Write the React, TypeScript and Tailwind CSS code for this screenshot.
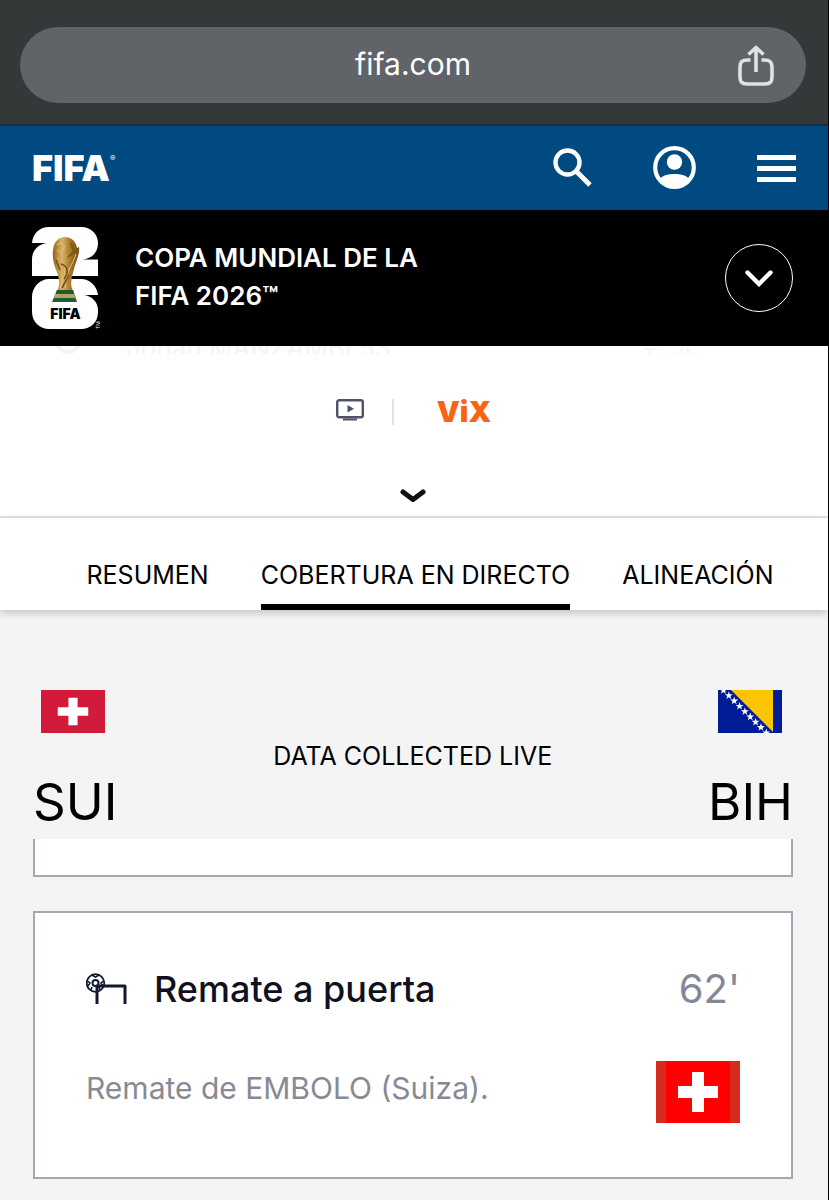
import React from "react";

const team = "flex flex-col";

function SwissFlag({ className, bg, side }: { className: string; bg: string; side: string }) {
  return (
    <svg viewBox="0 0 84 62" preserveAspectRatio="none" className={className} role="img" aria-label="Suiza">
      <rect width="84" height="62" fill={side} />
      <rect x="10" width="64" height="62" fill={bg} />
      <path d="M36 11h12v14h14v12H48v14H36V37H22V25h14z" fill="#fff" />
    </svg>
  );
}

function BosniaFlag() {
  const star = "M0-4.2 1-1.3 4-1.3 1.6.5 2.5 3.4 0 1.6-2.5 3.4-1.6.5-4-1.3-1-1.3z";
  return (
    <svg viewBox="0 0 64 43" className="h-[43px] w-16" role="img" aria-label="Bosnia y Herzegovina">
      <rect width="64" height="43" fill="#001c96" />
      <path d="M13 0h42v42z" fill="#fdc500" />
      <g fill="#fff">
        {[0, 1, 2, 3, 4, 5, 6, 7, 8].map((i) => (
          <path key={i} d={star} transform={`translate(${5.5 + i * 5.35} ${0.3 + i * 5.3})`} />
        ))}
      </g>
    </svg>
  );
}

function Emblem() {
  return (
    <svg viewBox="0 0 68 104" className="h-[104px] w-[68px] shrink-0" role="img" aria-label="FIFA 26">
      <defs>
        <linearGradient id="gold" x1="0" x2="1">
          <stop offset="0" stopColor="#8f6420" />
          <stop offset=".35" stopColor="#dcb364" />
          <stop offset=".65" stopColor="#a87a2c" />
          <stop offset="1" stopColor="#70480f" />
        </linearGradient>
      </defs>
      <path d="M0 17C1 7 8 1 17 1H49C59 1 66 8 66 17C66 26 61 32 51 33.500H66V50H0V33C0 25 6 18 15 17z" fill="#fff" />
      <path d="M0 71C0 61 8 53 17 53H49C58 53 65 60 66 69H52C60 70 66 76 66 84V86C66 96 59 103 49 103H17C8 103 0 96 0 86z" fill="#fff" />
      <path d="M26 63C28 57 27 51 25 46C22 39 20 32 21 24C22 15 27 11 33 11C40 11 44 16 45 22L47 21C48 28 44 35 42 43C40 50 38 56 40 63L42 66H24z" fill="url(#gold)" />
      <path d="M25 32C31 36 35 42 32 50L28 62M44 28C41 39 34 43 33 62M25 19C29 15 33 17 32 22S28 27 25 24" fill="none" stroke="#e6c37a" strokeWidth="1" />
      <path d="M29 38C36 40 37 47 32 53M39 17L42 26 36 31M30 62L37 49M24 34L28 44" fill="none" stroke="#7a5014" strokeWidth="1.600" />
      <path d="M25 64H41L45 76H20z" fill="#205c30" />
      <path d="M23 68H43L44 72H22z" fill="#b0a468" />
      <text x="33.500" y="93" textAnchor="middle" fontFamily="Inter, sans-serif" fontWeight="900" fontSize="14" fill="#000">FIFA</text>
      <text transform="translate(68 103) rotate(-90)" fontFamily="Inter, sans-serif" fontSize="5" fill="#fff">TM</text>
    </svg>
  );
}

export default function App() {
  return (
    <div className="min-h-screen border-r border-black bg-[#f4f4f4] font-['Inter','Liberation_Sans',sans-serif] text-black">
      <div className="border-b-2 border-[#1d2c42] bg-[#343838] pt-[27px] pr-[22px] pb-[21px] pl-5">
        <div className="relative flex h-[76px] items-center justify-center rounded-full bg-[#606367] text-white">
          <span className="pb-[2px] text-[30px]">fifa.com</span>
          <button aria-label="Compartir" className="absolute top-[18px] right-8">
            <svg viewBox="0 0 36 42" className="h-[42px] w-9" fill="none" stroke="#dfe1e3" strokeWidth="3.6">
              <path d="M12.500 15H9.500C4 15 2 17 2 22V32C2 37 4 39 9 39H27C32 39 34 37 34 32V22C34 17 32 15 26.500 15H23.500M18 27V3M10.500 9.500L18 2.500L25.500 9.500" strokeLinejoin="round" />
            </svg>
          </button>
        </div>
      </div>

      <header>
        <nav className="flex h-21 items-center justify-between bg-[#004a82] px-8 text-white">
          <a href="#" className="flex items-start text-[36px] leading-9 font-black">
            FIFA<span className="text-[8px] leading-4 font-normal">®</span>
          </a>
          <div className="flex items-center gap-15">
            <button aria-label="Buscar">
              <svg viewBox="0 0 40 40" className="size-10" fill="none" stroke="#fff">
                <circle cx="14.500" cy="14.500" r="12" strokeWidth="4.400" />
                <path d="M23 23L37 37" strokeWidth="4.800" />
              </svg>
            </button>
            <button aria-label="Cuenta">
              <svg viewBox="0 0 44 44" className="size-11">
                <circle cx="21.500" cy="21.500" r="19.300" fill="none" stroke="#fff" strokeWidth="4.200" />
                <circle cx="21.500" cy="16" r="7.700" fill="#fff" />
                <path d="M7.500 32C13 26.500 30 26.500 35.500 32C29 43 14 43 7.500 32z" fill="#fff" />
              </svg>
            </button>
            <button aria-label="Menú" className="flex w-[39px] flex-col gap-[6px]">
              <span className="h-[5px] bg-white" />
              <span className="h-[5px] bg-white" />
              <span className="h-[5px] bg-white" />
            </button>
          </div>
        </nav>

        <div className="flex h-34 items-center bg-black pr-[35px] pl-8 text-white">
          <Emblem />
          <h1 className="ml-[35px] w-[300px] pb-[2px] text-[26px] leading-[38px] font-semibold">
            COPA MUNDIAL DE LA FIFA 2026™
          </h1>
          <button aria-label="Desplegar" className="ml-auto flex size-17 items-center justify-center rounded-full border border-white">
            <svg viewBox="0 0 28 18" className="h-[18px] w-7" fill="none" stroke="#fff" strokeWidth="4.400" strokeLinecap="round">
              <path d="M2.500 3.500L14 15L25.500 3.500" />
            </svg>
          </button>
        </div>
      </header>

      <section className="flex h-[172px] flex-col items-center border-b-2 border-[#e3e3e3] bg-white">
        <div aria-hidden="true" className="flex h-2 w-full items-end overflow-hidden pr-[130px] pl-[54px] text-[26px] leading-[12px] text-[#f4f4f4]">
          <span className="size-7 rounded-full border-4 border-current" />
          <span className="ml-11">Johan MANZAMBI 53'</span>
          <span className="ml-auto self-start text-[24px] leading-6">Tarik</span>
        </div>
        <div className="mt-10 flex h-9 items-center pr-px">
          <svg viewBox="0 0 28 26" className="h-[26px] w-7" fill="none" stroke="#4f5367" strokeWidth="2.400">
            <rect x="1.200" y="1.200" width="25.600" height="17" rx="2" />
            <path d="M7 20.500H21" strokeWidth="2" />
            <path d="M11.500 6L18 9.700L11.500 13.400z" fill="#4f5367" stroke="none" />
          </svg>
          <span className="ml-7 h-[26px] w-[2px] bg-[#e0e3eb]" />
          <a href="#" className="ml-[43px] text-[29px] leading-8 font-black text-[#fb6212]">ViX</a>
        </div>
        <button aria-label="Mostrar más" className="mt-[58px] pr-[2px]">
          <svg viewBox="0 0 28 16" className="h-4 w-7" fill="none" stroke="#111" strokeWidth="5" strokeLinecap="round" strokeLinejoin="round">
            <path d="M4 4L14 11.500L24 4" />
          </svg>
        </button>
      </section>

      <nav className="flex h-[92px] items-end justify-center gap-[52px] bg-white pl-8 text-[25px] shadow-[0_3px_8px_rgba(0,0,0,0.2)]">
        <a href="#" className="border-b-[6px] border-transparent pb-[10px]">RESUMEN</a>
        <a href="#" className="border-b-[6px] border-black pb-[10px]">COBERTURA EN DIRECTO</a>
        <a href="#" className="border-b-[6px] border-transparent pb-[10px]">ALINEACIÓN</a>
      </nav>

      <main className="pt-20 pr-[35px] pl-[33px]">
        <div className="flex h-[149px] justify-between">
          <div className={team}>
            <SwissFlag className="ml-2 h-[43px] w-16" bg="#d21b3a" side="#d21b3a" />
            <span className="mt-10 text-[51px] leading-[58px]">SUI</span>
          </div>
          <p className="pt-[50px] text-[25px] leading-8">DATA COLLECTED LIVE</p>
          <div className={`${team} items-end`}>
            <div className="pr-[11px]"><BosniaFlag /></div>
            <span className="mt-10 text-[51px] leading-[58px]">BIH</span>
          </div>
        </div>

        <div className="h-[38px] border-2 border-t-0 border-[#a5a6b4] bg-white" />

        <article className="mt-[34px] border-2 border-[#a5a6b4] bg-white px-[51px] pt-[52px] pb-[54px]">
          <div className="flex h-12 items-center">
            <svg viewBox="0 0 42 32" className="h-8 w-[42px]" fill="none" stroke="#101a30" strokeWidth="2.200">
              <path d="M11 31V13H39V31" strokeWidth="3" strokeLinejoin="round" />
              <circle cx="9.500" cy="10" r="8.800" strokeWidth="1.800" />
              <circle cx="9.500" cy="10" r="3" strokeWidth="2" />
              <path d="M6 2L9.500 4L13 2M1.500 8L4 10L2 13M17.500 8L15 10L17 13M5 17L6 14M14 17L13 14" strokeWidth="1.600" />
            </svg>
            <h2 className="ml-[26px] text-[36px] font-medium text-[#101020]">Remate a puerta</h2>
            <time className="ml-auto text-[40px] text-[#84869a]">62'</time>
          </div>
          <div className="mt-12 flex h-[62px] justify-between">
            <p className="pt-1 text-[30px] leading-[46px] text-[#888994]">Remate de EMBOLO (Suiza).</p>
            <SwissFlag className="h-[62px] w-[84px]" bg="#fe0000" side="#d52b1e" />
          </div>
        </article>
      </main>
    </div>
  );
}
